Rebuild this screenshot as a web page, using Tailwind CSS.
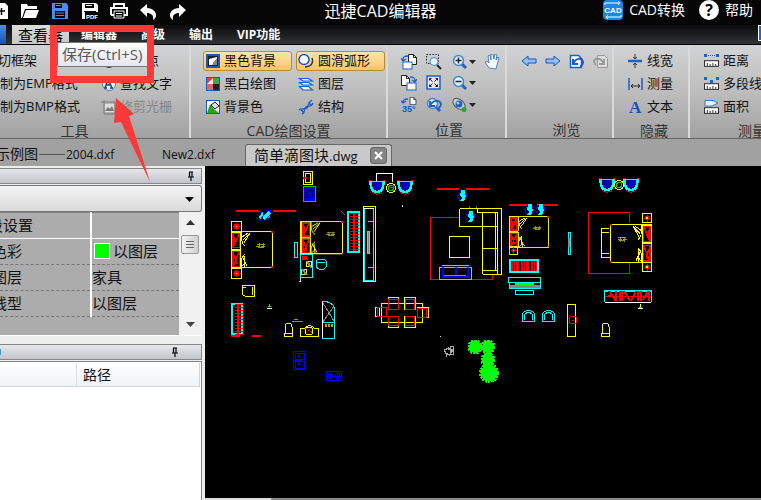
<!DOCTYPE html>
<html lang="zh-CN">
<head>
  <meta charset="UTF-8" />
  <meta name="viewport" content="width=device-width, initial-scale=1.0" />
  <title>迅捷CAD编辑器</title>
  <script src="https://cdn.jsdelivr.net/npm/@tailwindcss/browser@4"></script>
</head>
<body class="relative flex h-screen flex-col overflow-hidden bg-[#eeeeee] font-['Open_Sans','Noto_Sans_CJK_SC',sans-serif] text-[13px] text-[#111]">

  <!-- shared symbols -->
  <svg class="hidden">
    <symbol id="pin" viewBox="0 0 8 10"><path d="M2.500 1v5M5 1v5M1 6h6M2 1h4M4 6v4" stroke="#000" stroke-width="1.200" fill="none"/></symbol>
    <symbol id="page" viewBox="0 0 9 11"><path d="M.5.5h5l3 3v7h-8z" fill="#fff" stroke="#222"/><path d="M5.500.5v3h3" fill="none" stroke="#222"/></symbol>
    <symbol id="zoomlens" viewBox="0 0 16 16"><path d="M10 10l4 4" stroke="#1d62c8" stroke-width="3"/><circle cx="6.500" cy="6.500" r="5" fill="#e4f3ff" stroke="#4484d6" stroke-width="1.500"/></symbol>
    <symbol id="ruler" viewBox="0 0 16 8"><rect x=".5" y=".5" width="15" height="6" fill="#fff" stroke="#222"/><path d="M3.500 3v3M6.500 4v2M9.500 3v3M12.500 4v2" stroke="#222"/></symbol>
    <!-- pieces of the drawing -->
    <symbol id="bed" viewBox="0 0 44 38" overflow="visible">
      <rect x=".5" y=".5" width="41" height="36" fill="none" stroke="#ff0"/>
      <path d="M.5 1h9v17h-9zM.5 19h9v17h-9z" fill="none" stroke="#ff0"/>
      <path d="M2 2.500h6.500v14H2zM2 20.500h6.500v15H2zM3 15l5-12M3 34l5-13M3.500 6v9M3 24l3 9" fill="none" stroke="#f00" stroke-width="1.500"/>
      <path d="M10 1c0 8 1 12 4 14M12 9l7-7M13 12l6-10M11 6l6-4M10 36c0-8 1-10 4-13M11 25l5 10M13 25l1 11M15 31l-5 5" fill="none" stroke="#ff0"/>
      <path d="M26 13h8M25 15h4M30 15h4M27 16h6M28 12v5M32 12v5" stroke="#9a9a20"/>
      <path d="M40 0h2v2h-2zM40 35h2v2h-2z" fill="#f00"/>
    </symbol>
    <symbol id="stand" viewBox="0 0 10 10" overflow="visible"><rect x=".5" y=".5" width="9" height="9" fill="none" stroke="#ff0"/><circle cx="5" cy="5" r="2.500" fill="#f00"/><path d="M5 1.500v7M2 5h7" stroke="#f00"/><circle cx="5" cy="5" r=".8" fill="#ff0"/></symbol>
    <symbol id="plant" viewBox="0 0 16 12" overflow="visible"><path d="M2 7l4-5 1 4 5-5 3 2-1 4-5 4-3-1 1-4-4 4z" fill="#0ff"/><path d="M1 7l4-6M3 11l7-9M8 11l6-6M0 8l2 3h3M10 0h4l1 3" stroke="#00f" fill="none"/></symbol>
    <symbol id="lamp" viewBox="0 0 12 12" overflow="visible"><path d="M1 6l4-5 3 0 3 4-2 4-4 2z" fill="none" stroke="#00f"/><path d="M5 0h4v4l1 2-2 5H4l2-3-2-2z" fill="#0ff"/></symbol>
    <symbol id="armchair" viewBox="0 0 16 15" overflow="visible"><path d="M1.500 1c0 6 2 11 6.500 11s6.500-5 6.500-11" fill="none" stroke="#0ff" stroke-width="2.500"/><path d="M3.500 1h9v6l-3 3h-3l-3-3z" fill="#00c"/><path d="M3 1.500h10" stroke="#0ff" fill="none"/><path d="M0 .5h2M14 .5h2M3 12c2 3 8 3 10 0" stroke="#f00" fill="none"/></symbol>
    <symbol id="toilet" viewBox="0 0 10 15" overflow="visible"><path d="M1 11V5c0-5 7-5 7 0v6M.5 11.500h8v3h-8z" fill="none" stroke="#ff0"/></symbol>
    <symbol id="seat" viewBox="0 0 13 12" overflow="visible"><path d="M.5 11V5c0-6 12-6 12 0v6M2.500 10V5c0-3 8-3 8 0v5M0 11.500h13" fill="none" stroke="#0ff"/></symbol>
  </svg>

  <!-- title bar -->
  <header class="grid h-[25px] shrink-0 grid-cols-[1fr_auto_1fr] items-start bg-[#050505] text-white">
    <div class="flex items-start pt-[3px]">
      <button aria-label="新建" class="w-[21px]"><svg width="9" height="16"><path d="M-3 0h8l3 3v13h-11z" fill="#fff"/><path d="M0 8h5M1.500 5v7" stroke="#050505" stroke-width="1.500"/></svg></button>
      <button aria-label="打开" class="w-[31px]"><svg width="19" height="16"><path d="M0 15V1h6l1 2h9v3H4L1 15z" fill="#fff"/><path d="M5 7h13l-3 8H2z" fill="#fff"/></svg></button>
      <button aria-label="保存" class="w-[30px]"><svg width="16" height="16"><path d="M0 0h14l2 2v14H0z" fill="#4b8bf5"/><path d="M3 1h9v4H3zM3 8h10v7H3z" fill="#050505"/><path d="M4 2.500h5M4 10h8M4 12.500h8" stroke="#4b8bf5"/><path d="M10 1h2v4h-2z" fill="#4b8bf5"/></svg></button>
      <button aria-label="存为PDF" class="w-[28px]"><svg width="17" height="16"><path d="M0 0h14l2 2v14H0z" fill="#fff"/><path d="M3 1h9v4H3zM2 8h12v1H2z" fill="#050505"/><path d="M4 2.500h6" stroke="#fff"/><rect x="3" y="9" width="14" height="7" fill="#050505"/><text x="4" y="15.500" font-size="6" font-weight="700" font-family="Liberation Sans" fill="#fff">PDF</text></svg></button>
      <button aria-label="打印" class="w-[30px]"><svg width="18" height="16"><path d="M4 4V1h10v3M1 12V5h16v7h-3M4 12H1" fill="none" stroke="#fff" stroke-width="2"/><path d="M4 8h10v7H4zM6 10.500h6M6 13h6" fill="none" stroke="#fff"/></svg></button>
      <button aria-label="撤销" class="w-[28px]"><svg width="18" height="17"><path d="M0 7l7-6v4c6 0 9 4 9 7 0 2-1 4-3 5 1-5-2-7-6-7v4z" fill="#fff"/></svg></button>
      <button aria-label="重做"><svg width="18" height="17"><path d="M18 7l-7-6v4C5 5 2 9 2 12c0 2 1 4 3 5-1-5 2-7 6-7v4z" fill="#fff"/></svg></button>
    </div>
    <h1 class="text-[16px] leading-[22px]">迅捷CAD编辑器</h1>
    <div class="flex items-center justify-end pr-2 text-[14px] leading-5">
      <button class="flex items-center gap-1.5"><svg width="20" height="20"><rect width="20" height="20" rx="4" fill="#1b86ea"/><path d="M2 5V3h15M18 15v2H3M15 1l2 2-2 2M5 15l-2 2 2 2" stroke="#fff" fill="none"/><text x="10" y="13" text-anchor="middle" font-size="8" font-weight="700" font-family="Liberation Sans" fill="#fff">CAD</text></svg>CAD转换</button>
      <button class="ml-3.5 flex items-center gap-1.5"><svg width="20" height="20"><circle cx="10" cy="10" r="10" fill="#fff"/><text x="10" y="15.500" text-anchor="middle" font-size="16" font-weight="700" font-family="Open Sans" fill="#050505">?</text></svg>帮助</button>
    </div>
  </header>

  <!-- ribbon tabs -->
  <nav class="flex h-5 shrink-0 border-b border-black bg-linear-to-b from-[#0b0b0c] to-[#323437] text-[12px] font-bold text-white">
    <button aria-label="菜单" class="mr-1.5 w-1.5 bg-linear-to-b from-[#4a90e0] to-[#1553b0]"></button>
    <button class="bg-linear-to-b from-[#dcdcdc] to-[#c8c9cb] px-1.5 text-[15px] leading-5 font-normal text-black">查看器</button>
    <button class="px-3">编辑器</button>
    <button class="px-3">高级</button>
    <button class="px-3">输出</button>
    <button class="px-3">VIP功能</button>
    <span class="ml-auto h-4 w-[3px] border border-r-0 border-white bg-[#2264c8]"></span>
  </nav>

  <!-- ribbon -->
  <section class="flex h-[94px] shrink-0 overflow-hidden border-b border-[#666] bg-linear-to-b from-[#d2d3d4] via-[#bdbdbd] to-[#a2a2a2] whitespace-nowrap">
    <div class="flex w-[191px] shrink-0 flex-col border-r-2 border-[#dadada] pt-1.5">
      <div class="flex">
        <div class="flex w-[101px] flex-col items-start gap-[3px]">
          <button class="-ml-0.5 h-5">切框架</button>
          <button class="h-5">制为EMF格式</button>
          <button class="h-5">制为BMP格式</button>
        </div>
        <div class="flex flex-col gap-[3px]">
          <button class="flex h-5 items-center gap-1"><svg width="15" height="16"><circle cx="8" cy="9" r="6" fill="#333"/></svg><span class="pl-[26px]">点</span></button>
          <button class="flex h-5 items-center gap-1"><svg width="15" height="15"><circle cx="8" cy="7" r="6.500" fill="#f2f6ff" stroke="#5577aa"/><path d="M4 11l3-9 4 9M5.500 8h4M3 11h3M9 11h3" fill="none" stroke="#173f9c" stroke-width="1.500"/></svg>查找文字</button>
          <button class="flex h-5 items-center gap-1 text-[#858585]" disabled><svg width="15" height="15"><path d="M3 0v14h12M0 2h14v12" stroke="#777" fill="none"/><path d="M4 4h9v8H4z" fill="#ddd"/><path d="M4 11l3-4 2 2 2-3 2 5z" fill="#777"/></svg>修剪光栅</button>
        </div>
      </div>
      <div class="pt-1.5 pr-10 text-center text-[14px] leading-4 text-[#333]">工具</div>
    </div>

    <div class="flex w-[197px] shrink-0 flex-col border-r-2 border-[#dadada] px-3 pt-1.5">
      <div class="grid grid-cols-[89px_89px] gap-x-1 gap-y-[3px]">
        <button class="flex h-5 items-center gap-1 rounded-[3px] border border-[#b98a35] bg-linear-to-b from-[#fde3ae] to-[#fdc560] px-0.5"><svg width="14" height="14"><rect x="1" y="1" width="12" height="12" fill="#222" stroke="#1c57b5" stroke-width="2"/><path d="M3 11V5l8-2v2l-4 4v2z" fill="#fff"/><path d="M11 4v7H6z" fill="#888"/></svg>黑色背景</button>
        <button class="flex h-5 items-center gap-1 rounded-[3px] border border-[#b98a35] bg-linear-to-b from-[#fde3ae] to-[#fdc560] px-px"><svg width="16" height="16"><path d="M14 5c2 6-2 9-7 9" stroke="#333" stroke-width="1.500" fill="none"/><circle cx="6" cy="6.500" r="5" fill="#f5faff" stroke="#1c57c0" stroke-width="1.500"/></svg>圆滑弧形</button>
        <button class="flex h-5 items-center gap-1 px-[3px]"><svg width="14" height="14"><rect x=".5" y=".5" width="13" height="13" fill="#fff" stroke="#1c57c0"/><path d="M1 1h6v6H1z" fill="#eee"/><path d="M1 1h6L1 7z" fill="#d44"/><path d="M7 1h6v6H7z" fill="#3fa84a"/><path d="M1 7h6v6H1z" fill="#d66"/><path d="M7 7h6v6H7z" fill="#222"/></svg>黑白绘图</button>
        <button class="flex h-5 items-center gap-1 px-0.5"><svg width="16" height="15"><path d="M1.500 1.500h9l4 2.500H5zM1.500 5.500h9l4 2.500H5zM1.500 9.500h9l4 3.500H5z" fill="#f0f8ff" stroke="#1c5dc4" stroke-width="1.200"/></svg>图层</button>
        <button class="flex h-5 items-center gap-1 px-[3px]"><svg width="14" height="14"><rect x=".5" y=".5" width="13" height="13" fill="#fff" stroke="#1c57c0"/><path d="M1 13l3-9 4 5 5 4z" fill="#27a327"/><path d="M5 5l4-3 4 4-4 3z" fill="#ddd" stroke="#222"/></svg>背景色</button>
        <button class="flex h-5 items-center gap-1 px-0.5"><svg width="16" height="16"><path d="M1 11c3-3 6 1 8-2s1-6 5-8M4 15c4-1 1-5 4-7s5 1 7-4M3 10.500l2.500 3M10.500 3.500l3 3M7 8l3 1" stroke="#1c5dc4" fill="none" stroke-width="1.300"/></svg>结构</button>
      </div>
      <div class="pt-1.5 text-center text-[14px] leading-4 text-[#333]">CAD绘图设置</div>
    </div>

    <div class="flex w-[119px] shrink-0 flex-col border-r-2 border-[#dadada] pt-1.5 pl-[13px]">
      <div class="grid h-[66px] grid-cols-[25px_26px_33px_16px] items-center">
        <button aria-label="左旋"><svg width="16" height="16"><use href="#page" x="7" y="0" width="9" height="11"/><rect x="2" y="8" width="9" height="7" fill="#fff" stroke="#1c62c8"/><path d="M2 6c0-3 1-4 5-4M0 4l2 3 3-2" fill="none" stroke="#1c62c8" stroke-width="1.300"/></svg></button>
        <button aria-label="窗口缩放"><svg width="16" height="16"><path d="M.5.5h12v9H.5z" fill="none" stroke="#222" stroke-dasharray="1.500 1.500"/><path d="M11 11l4 4" stroke="#222" stroke-width="2"/><circle cx="8" cy="7.500" r="4" fill="#e4f3ff" stroke="#4a86d4"/></svg></button>
        <button aria-label="放大" class="flex items-center gap-0.5"><svg width="15" height="16"><use href="#zoomlens" width="16" height="16"/><path d="M3.500 6.500h6M6.500 3.500v6" stroke="#222" stroke-width="1.500"/></svg><svg width="7" height="4"><path d="M0 0h7L3.500 4z" fill="#222"/></svg></button>
        <button aria-label="平移"><svg width="16" height="16"><path d="M4 14L0 8l2-1 2 2-1-7 2-1 1 5V0h2l1 5 1-5 2 1-1 5 2-3 1 1-2 7-1 4z" fill="#f4faff" stroke="#4d83c8"/></svg></button>
        <button aria-label="右旋"><svg width="16" height="16"><use href="#page" x="0" y="0" width="9" height="11"/><rect x="6" y="8" width="9" height="7" fill="#fff" stroke="#1c62c8"/><path d="M9 2c4 0 5 1 5 4M11 5l3 2 2-3" fill="none" stroke="#1c62c8" stroke-width="1.300"/></svg></button>
        <button aria-label="全屏"><svg width="16" height="16"><rect x="1" y="1" width="13" height="13" fill="#e6e6e6" stroke="#1c62c8" stroke-width="1.500"/><path d="M3.500 5.500v-2h2M3.500 3.500l3 3M9.500 3.500h2v2M11.500 3.500l-3 3M3.500 9.500v2h2M3.500 11.500l3-3M9.500 11.500h2v-2M11.500 11.500l-3-3" fill="none" stroke="#222"/></svg></button>
        <button aria-label="缩小" class="flex items-center gap-0.5"><svg width="15" height="16"><use href="#zoomlens" width="16" height="16"/><path d="M3.500 6.500h6" stroke="#222" stroke-width="1.500"/></svg><svg width="7" height="4"><path d="M0 0h7L3.500 4z" fill="#222"/></svg></button>
        <span></span>
        <button aria-label="旋转35度"><svg width="16" height="16"><use href="#page" x="8" y="0" width="8" height="8"/><path d="M2 6c0-3 1-4 5-4M0 4l2 2 3-2" fill="none" stroke="#1c62c8" stroke-width="1.300"/><text x="1" y="15" font-size="9" font-weight="700" font-family="Liberation Sans" fill="#1457b8">35°</text></svg></button>
        <button aria-label="上一视图"><svg width="16" height="16"><use href="#zoomlens" width="16" height="16"/><path d="M4 4v5h5M4 9c3-7 10-6 11-2 0 2-1 3-2 4" fill="none" stroke="#1c5cc4" stroke-width="1.800"/></svg></button>
        <button aria-label="三维" class="flex items-center gap-0.5"><svg width="15" height="16"><ellipse cx="7" cy="7" rx="7" ry="4.500" transform="rotate(40 7 7)" fill="#ccc" stroke="#555"/><circle cx="7" cy="7" r="3.500" fill="#1c62c8"/><circle cx="6" cy="6" r="1.500" fill="#9cf"/><circle cx="12" cy="12.500" r="2.500" fill="#2aa62a"/></svg><svg width="7" height="4"><path d="M0 0h7L3.500 4z" fill="#222"/></svg></button>
      </div>
      <div class="pt-1.5 pr-2 text-center text-[14px] leading-4 text-[#333]">位置</div>
    </div>

    <div class="flex w-[107px] shrink-0 flex-col border-r-2 border-[#dadada] pt-1.5 pl-3.5">
      <div class="flex h-[66px] items-start gap-2">
        <button aria-label="后退" class="flex h-5 items-center"><svg width="16" height="12"><path d="M1 6l6-5v3h8v4H7v3z" fill="#8fc1f5" stroke="#1f55b0"/></svg></button>
        <button aria-label="前进" class="flex h-5 items-center"><svg width="16" height="12"><path d="M15 6L9 1v3H1v4h8v3z" fill="#8fc1f5" stroke="#1f55b0"/></svg></button>
        <button aria-label="恢复视图" class="flex h-5 items-center"><svg width="16" height="15"><path d="M1.500 1.500h8l3 3v9h-11z" fill="#fff" stroke="#1c62c8" stroke-width="1.500"/><path d="M4 5v5h5M4 10c3-7 9-6 10-2 0 3-2 4-3 4" fill="none" stroke="#1c5cc4" stroke-width="2"/></svg></button>
        <button aria-label="重复视图" class="flex h-5 items-center" disabled><svg width="16" height="15"><path d="M4.500 1.500h7l3 3v9h-10z" fill="#ddd" stroke="#999"/><path d="M11 5v5H6M11 10C8 3 2 4 1 7c0 2 1 3 2 4" fill="none" stroke="#999" stroke-width="1.800"/></svg></button>
      </div>
      <div class="pt-1.5 text-center text-[14px] leading-4 text-[#333]">浏览</div>
    </div>

    <div class="flex w-[76px] shrink-0 flex-col border-r-2 border-[#dadada] pt-1.5 pl-3.5">
      <div class="flex flex-col items-start gap-[3px]">
        <button class="flex h-5 items-center gap-1"><svg width="15" height="14"><path d="M0 7h14" stroke="#1c62c8" stroke-width="2.500"/><path d="M7 0v5M7 9v5M5 3l2 2 2-2M5 11l2-2 2 2" stroke="#333" fill="none"/></svg>线宽</button>
        <button class="flex h-5 items-center gap-1"><svg width="15" height="14"><path d="M1 1v12M14 1v12" stroke="#1c62c8" stroke-width="1.500"/><path d="M3 9h9M5 7L3 9l2 2M10 7l2 2-2 2" stroke="#222" fill="none"/></svg>测量</button>
        <button class="flex h-5 items-center gap-1"><svg width="15" height="14"><text x="1" y="13" font-size="17" font-weight="700" font-family="Liberation Serif" fill="#1654b4">A</text></svg>文本</button>
      </div>
      <div class="pt-1.5 pr-2 text-center text-[14px] leading-4 text-[#333]">隐藏</div>
    </div>

    <div class="flex w-[134px] shrink-0 flex-col pt-1.5 pl-3.5">
      <div class="flex flex-col items-start gap-[3px]">
        <button class="flex h-5 items-center gap-1"><svg width="15" height="14"><path d="M0 1.500h3M12 1.500h3" stroke="#1c62c8" stroke-width="3"/><path d="M4 1.500h7" stroke="#1c62c8" stroke-dasharray="1 1"/><use href="#ruler" x="0" y="6" width="15" height="8"/></svg>距离</button>
        <button class="flex h-5 items-center gap-1"><svg width="15" height="14"><path d="M0 1.500h3M12 1.500h3M6 4.500h3" stroke="#1c62c8" stroke-width="3"/><use href="#ruler" x="0" y="6" width="15" height="8"/></svg>多段线</button>
        <button class="flex h-5 items-center gap-1"><svg width="15" height="15"><path d="M1 .5h8l5 2.500-6 3H1z" fill="#e9f4ff" stroke="#3a78cc"/><use href="#ruler" x="0" y="7" width="15" height="8"/></svg>面积</button>
      </div>
      <div class="pt-1.5 pr-6 text-center text-[14px] leading-4 text-[#333]">测量</div>
    </div>
  </section>

  <!-- open files -->
  <div class="flex h-[27px] shrink-0 items-end bg-[#a1a1a1] text-[13px] leading-[22px]">
    <button class="-ml-1 w-[166px] text-left text-[12px]"><span class="font-['Noto_Sans_CJK_SC',sans-serif] text-[14px]">示例图——</span>2004.dxf</button>
    <button class="w-[83px] text-left text-[12px] leading-[22px]">New2.dxf</button>
    <div class="flex h-[22px] items-center gap-3 rounded-t-[3px] border border-b-0 border-[#666] bg-[#c9c9c9] pr-1 pl-2">
      <button class="leading-[22px]"><span class="text-[15px]">简单滴图块</span>.dwg</button>
      <button aria-label="关闭" class="flex size-[17px] items-center justify-center rounded-[3px] border border-[#666] bg-[#858585]"><svg width="9" height="9"><path d="M1 1l7 7M8 1L1 8" stroke="#fff" stroke-width="2"/></svg></button>
    </div>
  </div>

  <main class="flex min-h-0 flex-1">
    <aside class="flex w-[205px] shrink-0 flex-col border-r-[3px] border-[#eeeeee] bg-[#eeeeee] pt-0.5 text-[15px]">
      <div class="flex h-4 shrink-0 items-center justify-end border border-l-0 border-[#858585] bg-linear-to-b from-[#e6e7ea] to-[#c2c4cc] pr-1.5"><button aria-label="固定"><svg width="8" height="10"><use href="#pin"/></svg></button></div>
      <div class="relative mt-px shrink-0">
        <select aria-label="对象" class="block h-[27px] w-full appearance-none rounded-r-[3px] border border-l-0 border-[#777] bg-linear-to-b from-[#f4f4f4] to-[#dadada]"><option></option></select>
        <svg class="pointer-events-none absolute top-3 right-2" width="9" height="5"><path d="M0 0h9L4.500 5z" fill="#000"/></svg>
      </div>
      <div class="flex h-[124px] shrink-0 border-b border-white">
        <div class="flex-1 bg-[#acacac]">
          <table class="w-full border-collapse border-t border-[#808080] text-left leading-5">
            <tr class="h-[26px] border-b border-white"><th class="w-[91px] border-r-2 border-white p-0 pb-0.5 font-normal"><div class="-ml-3">段设置</div></th><td></td></tr>
            <tr class="h-[26px] border-b border-dashed border-[#777]"><th class="border-r-2 border-white p-0 pb-0.5 font-normal"><div class="-ml-2">色彩</div></th><td class="p-0 pb-0.5"><div class="flex items-center gap-[3px] pl-0.5"><span class="size-4 border border-white bg-[#00ff00]"></span>以图层</div></td></tr>
            <tr class="h-[26px] border-b border-dashed border-[#777]"><th class="border-r-2 border-white p-0 pb-0.5 font-normal"><div class="-ml-2">图层</div></th><td class="p-0 pb-0.5">家具</td></tr>
            <tr class="h-[26px] border-b border-dashed border-[#777]"><th class="border-r-2 border-white p-0 pb-0.5 font-normal"><div class="-ml-2">线型</div></th><td class="p-0 pb-0.5">以图层</td></tr>
          </table>
        </div>
        <div class="mr-0.5 ml-px flex w-5 flex-col items-center bg-[#f1f1f1] py-2">
          <svg width="9" height="5"><path d="M0 5h9L4.500 0z" fill="#333"/></svg>
          <div class="mt-2.5 flex h-[19px] w-[18px] flex-col items-center justify-center gap-0.5 rounded-[2px] border border-[#999] bg-linear-to-r from-[#f4f4f4] to-[#d0d0d0]"><span class="h-px w-2 bg-[#666]"></span><span class="h-px w-2 bg-[#666]"></span><span class="h-px w-2 bg-[#666]"></span></div>
          <svg class="mt-auto" width="9" height="5"><path d="M0 0h9L4.500 5z" fill="#444"/></svg>
        </div>
      </div>
      <div class="mt-2 flex h-4 shrink-0 items-center justify-between border border-l-0 border-[#858585] bg-linear-to-b from-[#e6e7ea] to-[#c2c4cc] pr-[22px]"><span class="h-1.5 w-px bg-[#3a9bd8]"></span><button aria-label="固定"><svg width="8" height="10"><use href="#pin"/></svg></button></div>
      <div class="mt-px min-h-0 flex-1 border-t border-r border-[#858585] bg-white">
        <div class="mt-px mr-px flex h-6 border-r border-b border-[#d2d4d8] bg-linear-to-b from-white to-[#f0f2f4] text-[14px] leading-6">
          <span class="w-[77px] border-r border-[#dcdfe3]"></span><span class="pl-1.5">路径</span>
        </div>
      </div>
    </aside>

    <section class="flex min-w-0 flex-1 flex-col bg-black">
      <svg class="min-h-0 flex-1" width="556" height="332" viewBox="205 166 556 332" preserveAspectRatio="xMinYMin slice" shape-rendering="crispEdges" fill="none" stroke-width="1">
        <!-- fixtures at the top -->
        <path d="M303.500 171.500h9v13h-9zM305.500 173.500h5v9h-5z" stroke="#ff0"/><path d="M303 177h4v2h-4z" fill="#f00"/>
        <rect x="303.500" y="186.500" width="12" height="15" fill="#00d" stroke="#0c0"/><rect x="306.500" y="190.500" width="6" height="7" stroke="#005"/>
        <path d="M236 211h23M273 211h23" stroke="#f00" stroke-width="2"/>
        <use href="#plant" x="257" y="210" width="15" height="11"/>
        <path d="M376.500 182v-8.500h16v8" stroke="#fff"/>
        <use href="#armchair" x="369" y="180" width="16" height="15"/><use href="#armchair" x="397" y="180" width="16" height="15"/>
        <circle cx="391" cy="188" r="4.500" stroke="#ff0"/><circle cx="391" cy="188" r="2.500" stroke="#0c0"/><path d="M390 187h3M392 189h2" stroke="#f0f"/>
        <path d="M402.500 205v2M440 336.500h1M300.500 278v3h-2" stroke="#ddd"/>
        <!-- beds on the left -->
        <use href="#stand" x="231" y="221" width="11" height="11"/><use href="#bed" x="231" y="231" width="44" height="38"/><use href="#stand" x="231" y="268" width="11" height="11"/>
        <g transform="translate(301 221) scale(1 .9)"><use href="#bed" width="44" height="38"/></g><path d="M300.500 221v33M300 253.500h42" stroke="#ff0"/>
        <rect x="294.500" y="242.500" width="3" height="15" stroke="#0ff"/>
        <rect x="300.500" y="254.500" width="12" height="23" stroke="#0ff"/><circle cx="304.500" cy="258" r="2.500" fill="#f00"/><circle cx="304" cy="272" r="3" stroke="#ff0"/><circle cx="309" cy="264" r="3" stroke="#ff0"/><path d="M307 261l4 7M302 269l5 6" stroke="#888" stroke-width="2"/>
        <path d="M318 259h6l2 2v6l-2 2h-5l-3-2v-6zM317 262h8" stroke="#0ff"/>
        <rect x="348" y="212" width="11" height="40" stroke="#0ff" stroke-width="2"/><path d="M354 213v38" stroke="#f00" stroke-width="9" stroke-dasharray="1 2"/><path d="M354 213v38" stroke="#f00" stroke-width="2"/>
        <path d="M341 211l4 4" stroke="#666"/>
        <rect x="363.500" y="206.500" width="12" height="75" stroke="#ff0"/><path d="M364.500 280V208.500h9V280zM368 221.500h6M368 267.500h6" stroke="#0ff"/><path d="M364 208.500h10" stroke="#fff"/><rect x="367" y="231" width="2" height="22" fill="#888" stroke="#0ff"/>
        <!-- lower left -->
        <path d="M242.500 285.500h12v11h-9l-3-2zM252.500 287v8M243 287.500h3" stroke="#ff0"/>
        <rect x="232" y="304" width="10" height="30" stroke="#0ff" stroke-width="2"/><path d="M239 304v32" stroke="#f00" stroke-width="9" stroke-dasharray="1 2"/><path d="M238 304v31M231 335.500h9M252 335.500h9" stroke="#f00" stroke-width="2"/>
        <path d="M267 308h5" stroke="#fff"/><path d="M268 306.500h3M269.500 304v3" stroke="#0f0"/>
        <use href="#toilet" x="284" y="322" width="10" height="15"/><path d="M292 321.500h11" stroke="#888"/><path d="M294 319h4" stroke="#990"/>
        <path d="M300.500 336.500v-8h4c3-4 7-4 10 0h4v8z" stroke="#ff0"/><circle cx="309" cy="331" r="4" stroke="#ff0"/><path d="M305 328l8 5M306 333l6-5" stroke="#f00" stroke-dasharray="2 1"/>
        <path d="M322.500 338.500v-37c6 0 11 2 12 7v30zM323 322.500h11" stroke="#0ff"/><path d="M322.500 302v36" stroke="#fff"/><path d="M323 303l11 18M334 306l-11 16" stroke="#888"/><path d="M325 325h9" stroke="#aa0" stroke-width="3" stroke-dasharray="2 1"/>
        <g stroke="#ff0"><rect x="381.500" y="303.500" width="41" height="19"/><rect x="388.500" y="297.500" width="10" height="12"/><rect x="404.500" y="297.500" width="11" height="12"/><rect x="388.500" y="316.500" width="10" height="11"/><rect x="404.500" y="316.500" width="11" height="11"/><rect x="375.500" y="307.500" width="4" height="9"/><rect x="417.500" y="307.500" width="11" height="10"/></g>
        <g stroke="#f00"><rect x="388.500" y="299.500" width="10" height="10"/><rect x="405.500" y="299.500" width="9" height="10"/><rect x="388.500" y="316.500" width="10" height="9"/><rect x="405.500" y="316.500" width="9" height="9"/><rect x="377.500" y="307.500" width="9" height="9"/><rect x="417.500" y="308.500" width="9" height="9"/></g>
        <g stroke="#00f"><rect x="293.500" y="351.500" width="12" height="18"/><rect x="295.500" y="353.500" width="9" height="6"/><rect x="295.500" y="361.500" width="9" height="7"/><path d="M294 360.500h8M299 355v3M299 361v4" stroke-width="2"/><rect x="326.500" y="371.500" width="15" height="9"/><circle cx="330.500" cy="376" r="2.500"/><circle cx="337.500" cy="376" r="2.500"/><path d="M327 376h14M330.500 373v7M337.500 373v7"/></g>
        <!-- living room -->
        <path d="M437 189h22M466 189h23" stroke="#f00" stroke-width="2"/><use href="#lamp" x="456" y="190" width="12" height="12"/>
        <path d="M459 217H430.500v62H492.500v-5" stroke="#f00"/>
        <path d="M459.500 208.500h42v66h-19M459.500 208.500v18h38M477.500 209v3.500h20V274M482.500 213v61M495.500 213v57M482 248.500h15M482 270.500h15" stroke="#ff0"/>
        <use href="#lamp" x="464" y="211" width="12" height="12"/><path d="M469.500 208v-2M476.500 208v-2" stroke="#666"/>
        <rect x="449.500" y="236.500" width="20" height="21" stroke="#ff0"/>
        <path d="M439.500 267.500h32v12h-32zM442 265.500h27" stroke="#0ff"/><path d="M443 266v11h25v-11M455.500 266v11" stroke="#00f" stroke-width="2"/><path d="M444 275.500h22" stroke="#888"/>
        <!-- middle bedroom -->
        <path d="M509 205h22M537 205h21" stroke="#f00" stroke-width="2"/><use href="#lamp" x="523" y="204" width="12" height="12"/><use href="#lamp" x="534" y="204" width="12" height="12"/>
        <g transform="translate(509 216) scale(.95 .85)"><use href="#bed" width="44" height="38"/></g>
        <use href="#stand" x="509" y="246" width="9" height="9"/>
        <rect x="510" y="260" width="28" height="12" stroke="#0ff" stroke-width="2"/><path d="M511 265.500h26" stroke="#f00" stroke-width="10" stroke-dasharray="2 1 1 1 3 2"/>
        <path d="M508.500 277.500h32v5h-32zM509.500 283v5.500h31V283M515.500 290.500h18v4h-18z" stroke="#0ff"/><path d="M510 286.500h30" stroke="#888" stroke-width="3"/><path d="M515 284h19" stroke="#0f0" stroke-width="2"/>
        <path d="M568.500 232.500h2v22h-2z" stroke="#0ff"/><path d="M568.500 238v9" stroke="#888" stroke-width="2"/>
        <!-- right bedroom -->
        <use href="#armchair" x="599" y="178" width="16" height="15"/><use href="#armchair" x="623" y="178" width="16" height="15"/><circle cx="619" cy="185" r="4.500" stroke="#ff0"/><circle cx="619" cy="185" r="2.500" stroke="#0d0"/>
        <path d="M629.500 223v-10.500h-41v61h41v-11" stroke="#f00"/>
        <use href="#stand" x="642" y="213" width="10" height="10"/><use href="#stand" x="642" y="262" width="10" height="10"/>
        <g transform="translate(652 224) scale(-1 1.050)"><use href="#bed" width="44" height="38"/></g>
        <path d="M609 228.500h-7.500v28.500h8M602 232.500h7M602 253.500h7" stroke="#ff0"/>
        <path d="M604.500 302V290H651.500v12" stroke="#0ff"/><path d="M604 290.500h48" stroke="#0ff" stroke-width="2"/><path d="M608 296h3M609 291l7 10M616 291v10M620 291v10M622 291v10M624 291l6 10M631 301l5-10M638 291v10M641 291v10M643 300l5-9M649 291v10" stroke="#f00" stroke-width="2"/><path d="M605 296.500h46" stroke="#f00"/><path d="M605 302.500h46M638 308h5" stroke="#fff"/><path d="M640.500 304v3" stroke="#ff0"/><path d="M639 307h3" stroke="#0f0"/>
        <!-- lower right -->
        <use href="#seat" x="522" y="310" width="13" height="12"/><use href="#seat" x="542" y="310" width="13" height="12"/>
        <rect x="567.500" y="304.500" width="8" height="32" stroke="#ff0"/><circle cx="573" cy="320" r="4" stroke="#f00"/><path d="M572 320h2" stroke="#f00"/>
        <use href="#toilet" x="601" y="322" width="10" height="15"/>
        <path d="M444.500 350l4-2 4 3-3 4-4-2zM450.500 346.500h3v8h-3zM446.500 353v4M448 349l5 1" stroke="#aaa"/>
        <!-- trees -->
        <g fill="#0f0" stroke="#0f0" stroke-width="3" stroke-dasharray="2 1"><circle cx="475" cy="347" r="6"/><circle cx="488" cy="347" r="6"/><circle cx="488" cy="360" r="6"/><circle cx="489" cy="373" r="8.500"/></g>
      </svg>
      <div class="h-0.5 shrink-0 bg-[#8a8a8a]"><div class="h-full w-[66px] bg-[#ddd]"></div></div>
    </section>
  </main>

  <!-- tooltip and the marker over it -->
  <div role="tooltip" class="absolute top-[42px] left-[57px] h-[25px] w-[97px] rounded-[2px] border border-[#767676] bg-linear-to-b from-white to-[#e4e5f0] px-1 text-[15px] leading-[23px] whitespace-nowrap text-[#575757]">保存(Ctrl+S)</div>
  <div class="absolute top-[25px] left-[50px] h-[58px] w-[104px] border-[7px] border-[#fa3939]"></div>
  <svg class="absolute top-[97px] left-[112px]" width="40" height="87"><path d="M4 1l18 16-5 2 21 66L9 25l-7 1z" fill="#fa3939"/></svg>
</body>
</html>
